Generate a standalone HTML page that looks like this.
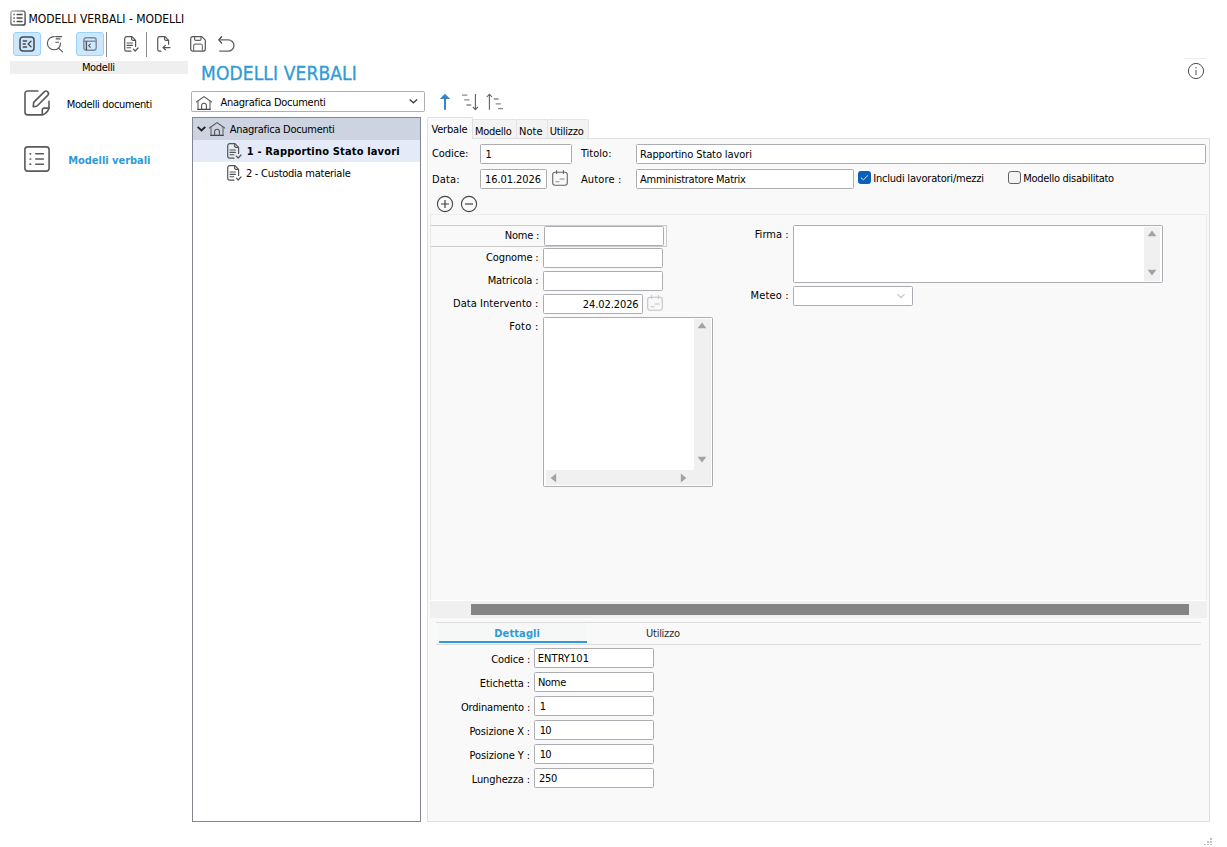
<!DOCTYPE html>
<html lang="it">
<head>
<meta charset="utf-8">
<title>MODELLI VERBALI - MODELLI</title>
<style>
html,body{margin:0;padding:0;background:#fff;}
body{width:1227px;height:847px;position:relative;overflow:hidden;font-family:"DejaVu Sans Condensed","Liberation Sans",sans-serif;font-size:11px;color:#000;}
.a{position:absolute;box-sizing:border-box;}
.t{position:absolute;white-space:pre;}
svg{position:absolute;overflow:visible;}
.in{position:absolute;box-sizing:border-box;background:#fff;border:1px solid #abadb3;border-radius:1.5px;}
.tb{position:absolute;box-sizing:border-box;background:#cce8ff;border:1px solid #99d1ff;border-radius:3px;}
.sep{position:absolute;width:1px;background:#8c8c8c;}
.row{position:absolute;left:0;right:0;height:22px;}
.sb{position:absolute;background:#f0f0f0;}
</style>
</head>
<body>
<!-- title icon -->
<svg style="left:10px;top:10px" width="16" height="16" viewBox="0 0 16 16" fill="none" stroke="#4a4a4a" stroke-width="1.3">
<defs><linearGradient id="tg" x1="0" y1="0" x2="1" y2="1"><stop offset="0" stop-color="#b8b8b8"/><stop offset="0.55" stop-color="#6a6a6a"/><stop offset="1" stop-color="#444"/></linearGradient></defs>
<rect x="0.9" y="0.9" width="14.2" height="14.2" rx="2.2" stroke="url(#tg)" stroke-width="1.5"/>
<path d="M3.4 4.6h1.4M3.4 8h1.4M3.4 11.4h1.4M6.6 4.6h6M6.6 8h6M6.6 11.4h6" stroke-width="1.5"/>
</svg>

<!-- toolbar -->
<div class="tb" style="left:13px;top:32px;width:28px;height:24px"></div>
<svg style="left:19px;top:36px" width="16" height="16" viewBox="0 0 16 16" fill="none" stroke="#4b4b4b" stroke-width="1.55" stroke-linecap="round" stroke-linejoin="round">
<rect x="1" y="1" width="14" height="14" rx="3"/>
<path d="M4.2 5h3.4M4.2 8h2.2M4.2 11h3.4M12 5.2L9.2 8l2.8 2.8" stroke-width="1.4"/>
</svg>
<svg style="left:46px;top:35px" width="18" height="18" viewBox="0 0 18 18" fill="none" stroke="#555" stroke-width="1.1" stroke-linecap="round">
<path d="M8.2 1.6A6.6 6.6 0 1 0 14.6 8"/>
<path d="M12.6 13.2L16.6 16.8"/>
<path d="M9.6 1.6h6M10.2 3.9h3.8M9.8 7.3h2.8"/>
</svg>
<div class="tb" style="left:76px;top:32px;width:28px;height:24px"></div>
<svg style="left:83px;top:37px" width="14" height="14" viewBox="0 0 14 14" fill="none" stroke="#7e8a96" stroke-width="1.4" stroke-linejoin="round">
<rect x="0.8" y="0.8" width="12.4" height="12.4" rx="2.4"/>
<path d="M0.8 4.2h12.4"/>
<path d="M3.4 4.2v9" stroke="#555"/>
<path d="M7.6 6.6L5.6 8.6l2 2" stroke="#555" stroke-width="1.1"/>
</svg>
<div class="sep" style="left:106px;top:32px;height:25px"></div>
<svg style="left:124px;top:36px" width="15" height="16" viewBox="0 0 15 16" fill="none" stroke="#555" stroke-width="1.2" stroke-linecap="round" stroke-linejoin="round">
<path d="M7 15.2H2.6A2 2 0 0 1 .7 13.2V2.7A2 2 0 0 1 2.6.7H8l3.6 3.6v6.2"/>
<path d="M7.6.9v2.2a1.2 1.2 0 0 0 1.2 1.2h2.4"/>
<path d="M3 7h5.4M3 9.4h5.4M3 11.8h3.8" stroke-width="1.1"/>
<path d="M9.4 13.2l1.8 1.8 2.8-3"/>
</svg>
<div class="sep" style="left:146px;top:32px;height:25px"></div>
<svg style="left:157px;top:36px" width="14" height="16" viewBox="0 0 14 16" fill="none" stroke="#555" stroke-width="1.2" stroke-linecap="round" stroke-linejoin="round">
<path d="M4 15.2H2.6A2 2 0 0 1 .7 13.2V2.7A2 2 0 0 1 2.6.7H8l3.6 3.6v4"/>
<path d="M7.6.9v2.2a1.2 1.2 0 0 0 1.2 1.2h2.4"/>
<path d="M13 11.6H6.2M8.4 9.4L6 11.6l2.4 2.2"/>
</svg>
<svg style="left:190px;top:36px" width="16" height="16" viewBox="0 0 16 16" fill="none" stroke="#555" stroke-width="1.2" stroke-linejoin="round">
<path d="M2.6.7h9.2l3.5 3.5v8.9a2 2 0 0 1-2 2H2.6a2 2 0 0 1-1.9-2V2.7A2 2 0 0 1 2.6.7z"/>
<path d="M4.6.9v2.4a1 1 0 0 0 1 1h4.4a1 1 0 0 0 1-1V.9" stroke="#666"/>
<path d="M3.6 15V9.8a1.6 1.6 0 0 1 1.6-1.6h5.6a1.6 1.6 0 0 1 1.6 1.6V15" stroke="#777"/>
</svg>
<svg style="left:218px;top:36px" width="17" height="16" viewBox="0 0 17 16" fill="none" stroke="#666" stroke-width="1.3" stroke-linecap="round" stroke-linejoin="round">
<path d="M3.6.8L.8 3.9l2.8 3.2" stroke="#444"/>
<path d="M1 3.900h9.300a5.600 5.600 0 0 1 0 11.200H1.200" stroke-linecap="butt" stroke-width="1.400"/>
</svg>

<!-- Modelli bar -->
<div class="a" style="left:10px;top:61px;width:178px;height:13px;background:#efefef"></div>

<!-- sidebar icons -->
<svg style="left:24px;top:90px" width="26" height="26" viewBox="0 0 26 26" fill="none" stroke="#5a5a5a" stroke-width="1.6" stroke-linecap="round" stroke-linejoin="round">
<path d="M13.900.950H3.600A2.600 2.600 0 0 0 1 3.550v18.750a2.600 2.600 0 0 0 2.600 2.600h14.700Q23.400 23.200 25 18.200V11.300"/>
<path d="M25 18.100h-4.800a1.900 1.900 0 0 0-1.900 1.900v4.800"/>
<path d="M9.200 16.600l.5-4.200L20.200 1.900a2.470 2.470 0 0 1 3.500 3.500L13.600 15.500q-.8.800-1.800.9z"/>
</svg>
<svg style="left:24px;top:146px" width="26" height="26" viewBox="0 0 26 26" fill="none" stroke="#5a5a5a" stroke-width="1.6" stroke-linecap="round" stroke-linejoin="round">
<rect x=".9" y=".9" width="24.200" height="24.200" rx="2.800"/>
<path d="M11.700 7.800h7.800M11.700 13h7.800M11.700 18.200h7.800" stroke-width="1.400"/>
<path d="M6.200 7.800h.4M6.200 13h.4M6.200 18.200h.4" stroke-width="1.700"/>
</svg>

<!-- info -->
<svg style="left:1187px;top:62px" width="18" height="18" viewBox="0 0 18 18" fill="none" stroke="#505050" stroke-width="1">
<circle cx="9" cy="9" r="7.600"/>
<path d="M9 8v5" stroke-width="1.300" stroke="#777"/>
<path d="M9 5v1.400" stroke-width="1.300" stroke="#777"/>
</svg>
<div class="a" style="left:1185px;top:58px;width:21px;height:1px;background:#ececec"></div>

<!-- combo -->
<div class="in" style="left:191px;top:91px;width:234px;height:21px;border-color:#b0b0b0;border-radius:2px"></div>
<svg style="left:196px;top:95px" width="16" height="15" viewBox="0 0 16 15" fill="none" stroke="#555" stroke-width="1.200" stroke-linejoin="round" stroke-linecap="round">
<path d="M.4 7L8 1.600l7.600 5.400" stroke-width="1.100"/>
<path d="M2 6.200v8.100M14 6.200v8.100" stroke="#777" stroke-width="1.300"/>
<path d="M1.800 14.400h12.400" stroke="#444" stroke-width="1.200"/>
<path d="M5.600 14.200v-3.600a2.400 2.400 0 0 1 4.800 0v3.600" stroke="#555" stroke-width="1.100"/>
</svg>
<svg style="left:409px;top:98px" width="9" height="6" viewBox="0 0 9 6" fill="none" stroke="#3c3c3c" stroke-width="1.300"><path d="M.7 1.400L4.400 4.800 8.100 1.400"/></svg>

<!-- tree -->
<div class="a" style="left:192px;top:117px;width:229px;height:705px;border:1px solid #80858f;background:#fff">
 <div class="row" style="top:0;background:#cdd3e0"></div>
 <div class="row" style="top:22px;background:#e5eaf8"></div>
</div>
<svg style="left:197px;top:126px" width="9" height="6" viewBox="0 0 9 6" fill="none" stroke="#222" stroke-width="1.800"><path d="M.7.900L4.500 4.500 8.300.9"/></svg>
<svg style="left:209px;top:121px" width="16" height="15" viewBox="0 0 16 15" fill="none" stroke="#555" stroke-width="1.200" stroke-linejoin="round" stroke-linecap="round">
<path d="M.4 7L8 1.600l7.600 5.400" stroke-width="1.100"/>
<path d="M2 6.200v8.100M14 6.200v8.100" stroke="#777" stroke-width="1.300"/>
<path d="M1.800 14.400h12.400" stroke="#444" stroke-width="1.200"/>
<path d="M5.600 14.200v-3.600a2.400 2.400 0 0 1 4.800 0v3.600" stroke="#555" stroke-width="1.100"/>
</svg>
<svg style="left:227px;top:143px" width="15" height="16" viewBox="0 0 15 16" fill="none" stroke="#555" stroke-width="1.200" stroke-linecap="round" stroke-linejoin="round">
<path d="M7 15.200H2.600A2 2 0 0 1 .7 13.200V2.700A2 2 0 0 1 2.600.7H8l3.600 3.600v6.200"/>
<path d="M7.600.9v2.200a1.200 1.200 0 0 0 1.200 1.200h2.400"/>
<path d="M3 7h5.400M3 9.400h5.400M3 11.800h3.800" stroke-width="1.100"/>
<path d="M9.400 13.200l1.800 1.800 2.800-3"/>
</svg>
<svg style="left:227px;top:165px" width="15" height="16" viewBox="0 0 15 16" fill="none" stroke="#555" stroke-width="1.200" stroke-linecap="round" stroke-linejoin="round">
<path d="M7 15.200H2.600A2 2 0 0 1 .7 13.200V2.700A2 2 0 0 1 2.600.7H8l3.600 3.600v6.200"/>
<path d="M7.600.9v2.200a1.200 1.200 0 0 0 1.200 1.200h2.400"/>
<path d="M3 7h5.400M3 9.400h5.400M3 11.800h3.800" stroke-width="1.100"/>
<path d="M9.400 13.200l1.800 1.800 2.800-3"/>
</svg>

<!-- sort icons -->
<svg style="left:439px;top:93px" width="12" height="17" viewBox="0 0 12 17" fill="#3a84c4" stroke="none">
<path d="M6 .8L11.200 6H.8z"/><rect x="5" y="5" width="2" height="11.800"/>
</svg>
<svg style="left:461px;top:93px" width="18" height="18" viewBox="0 0 18 18" fill="none" stroke="#777" stroke-width="1.100">
<path d="M1 2.200h5.400M3.200 6.900h5.200M5.400 12h4.800" stroke="#8a8a8a" stroke-width="1.300"/>
<path d="M14.400 1v15.400M11.800 13.800l2.600 2.800 2.600-2.800" stroke="#606060"/>
</svg>
<svg style="left:485px;top:93px" width="19" height="18" viewBox="0 0 19 18" fill="none" stroke="#777" stroke-width="1.100">
<path d="M4.400 16.800V1.200M1.800 4l2.600-2.800L7 4" stroke="#606060"/>
<path d="M8.800 6h4.800M10.600 10.800h5.200M13 15.700h5" stroke="#8a8a8a" stroke-width="1.300"/>
</svg>

<!-- tab page -->
<div class="a" style="left:427px;top:138px;width:783px;height:684px;border:1px solid #dfdfdf;background:#f9f9f9"></div>
<!-- inactive tabs -->
<div class="a" style="left:472px;top:119px;width:45px;height:19px;border:1px solid #e3e3e3;border-bottom:none;background:#f3f3f3;border-radius:2px 2px 0 0"></div>
<div class="a" style="left:516px;top:119px;width:32px;height:19px;border:1px solid #e3e3e3;border-bottom:none;background:#f3f3f3;border-radius:2px 2px 0 0"></div>
<div class="a" style="left:547px;top:119px;width:42px;height:19px;border:1px solid #e3e3e3;border-bottom:none;background:#f3f3f3;border-radius:2px 2px 0 0"></div>
<!-- active tab -->
<div class="a" style="left:427px;top:117px;width:46px;height:22px;border:1px solid #e0e0e0;border-bottom:none;background:#f9f9f9;border-radius:2px 2px 0 0"></div>

<!-- top form -->
<div class="in" style="left:480px;top:144px;width:92px;height:20px"></div>
<div class="in" style="left:636px;top:144px;width:570px;height:20px"></div>
<div class="in" style="left:480px;top:169px;width:67px;height:20px"></div>
<div class="in" style="left:636px;top:169px;width:218px;height:20px"></div>
<!-- calendar -->
<svg style="left:552px;top:170px" width="16" height="16" viewBox="0 0 16 16" fill="none" stroke="#666" stroke-width="1.100" stroke-linecap="round">
<rect x=".7" y="2.200" width="14.600" height="13" rx="2.400"/>
<path d="M4.600.6v2.800M11.400.6v2.800"/>
<path d="M8 9h4.200M4 11.800h3" stroke="#888"/>
</svg>
<!-- checkboxes -->
<div class="a" style="left:858px;top:171px;width:13px;height:13px;background:#0a5fb8;border-radius:3px"></div>
<svg style="left:858px;top:171px" width="13" height="13" viewBox="0 0 13 13" fill="none" stroke="#dbe8f6" stroke-width="1" stroke-linecap="round" stroke-linejoin="round"><path d="M3.200 6.900l2.200 1.900 4.300-4.200"/></svg>
<div class="a" style="left:1008px;top:171px;width:13px;height:13px;background:#f3f3f3;border:1px solid #626262;border-radius:3px"></div>
<!-- plus / minus -->
<svg style="left:436px;top:195px" width="18" height="18" viewBox="0 0 18 18" fill="none" stroke="#444" stroke-width="1.100">
<circle cx="9" cy="9" r="7.600"/><path d="M5 9h8M9 5v8" stroke-width="1.200"/>
</svg>
<svg style="left:460px;top:195px" width="18" height="18" viewBox="0 0 18 18" fill="none" stroke="#444" stroke-width="1.100">
<circle cx="9" cy="9" r="7.600"/><path d="M5 9h8" stroke-width="1.200"/>
</svg>

<!-- inner panel -->
<div class="a" style="left:430px;top:214px;width:777px;height:387px;border:1px solid #ebebeb;border-bottom-color:#fff"></div>
<!-- selected frame around Nome -->
<div class="a" style="left:431px;top:225px;width:236px;height:22px;border:1px solid #cbcbcb;border-left:none"></div>
<div class="in" style="left:544px;top:226px;width:120px;height:20px"></div>
<div class="in" style="left:543px;top:248px;width:120px;height:20px"></div>
<div class="in" style="left:543px;top:271px;width:120px;height:20px"></div>
<div class="in" style="left:543px;top:294px;width:100px;height:20px"></div>
<svg style="left:647px;top:295px" width="16" height="16" viewBox="0 0 16 16" fill="none" stroke="#c4c4c4" stroke-width="1.100" stroke-linecap="round">
<rect x=".7" y="2.200" width="14.600" height="13" rx="2.400"/>
<path d="M4.600.6v2.800M11.400.6v2.800"/>
<path d="M8 9h4.200M4 11.800h3"/>
</svg>
<!-- Foto box -->
<div class="in" style="left:543px;top:317px;width:170px;height:170px">
 <div class="sb" style="right:1px;top:1px;width:17px;bottom:1px"></div>
 <div class="sb" style="left:2px;bottom:1px;right:1px;height:15px"></div>
</div>
<svg style="left:697px;top:322px" width="10" height="7" viewBox="0 0 10 7" fill="#a3a3a3"><path d="M5 .6L9.400 6.200H.6z"/></svg>
<svg style="left:697px;top:456px" width="10" height="7" viewBox="0 0 10 7" fill="#a3a3a3"><path d="M5 6.400L9.400.8H.6z"/></svg>
<svg style="left:550px;top:473px" width="7" height="10" viewBox="0 0 7 10" fill="#a3a3a3"><path d="M.6 5L6.200.6v8.800z"/></svg>
<svg style="left:680px;top:473px" width="7" height="10" viewBox="0 0 7 10" fill="#a3a3a3"><path d="M6.400 5L.8.600v8.800z"/></svg>
<!-- Firma -->
<div class="in" style="left:793px;top:225px;width:370px;height:58px">
 <div class="sb" style="right:2px;top:1px;width:16px;bottom:1px"></div>
</div>
<svg style="left:1147px;top:230px" width="10" height="7" viewBox="0 0 10 7" fill="#a3a3a3"><path d="M5 .6L9.400 6.200H.6z"/></svg>
<svg style="left:1147px;top:269px" width="10" height="7" viewBox="0 0 10 7" fill="#a3a3a3"><path d="M5 6.400L9.400.8H.6z"/></svg>
<!-- Meteo -->
<div class="in" style="left:793px;top:286px;width:120px;height:20px"></div>
<svg style="left:897px;top:293px" width="9" height="6" viewBox="0 0 9 6" fill="none" stroke="#bcbcbc" stroke-width="1.100"><path d="M.5 1.400L4 4.600 7.500 1.400"/></svg>

<!-- horizontal scrollbar -->
<div class="a" style="left:430px;top:601px;width:777px;height:17px;background:#f0f0f0"></div>
<div class="a" style="left:471px;top:604px;width:718px;height:11px;background:#858585"></div>

<!-- details panel -->
<div class="a" style="left:436px;top:622px;width:765px;height:1px;background:#dcdcdc"></div>
<div class="a" style="left:439px;top:623px;width:148px;height:18px;background:#f6f7f7"></div>
<div class="a" style="left:439px;top:641px;width:148px;height:2px;background:#2e9bd6"></div>
<div class="a" style="left:436px;top:644px;width:765px;height:1px;background:#dcdcdc"></div>
<div class="in" style="left:534px;top:648px;width:120px;height:20px"></div>
<div class="in" style="left:534px;top:672px;width:120px;height:20px"></div>
<div class="in" style="left:534px;top:696px;width:120px;height:20px"></div>
<div class="in" style="left:534px;top:720px;width:120px;height:20px"></div>
<div class="in" style="left:534px;top:744px;width:120px;height:20px"></div>
<div class="in" style="left:534px;top:768px;width:120px;height:20px"></div>

<!-- resize grip -->
<svg style="left:1203px;top:837px" width="10" height="9" viewBox="0 0 10 9" fill="#bdbdbd">
<rect x="7" y="1" width="2" height="2"/><rect x="4" y="4" width="2" height="2"/><rect x="7" y="4" width="2" height="2"/>
<rect x="1" y="7" width="2" height="1"/><rect x="4" y="7" width="2" height="1"/><rect x="7" y="7" width="2" height="1"/>
</svg>

<div class="t" style="left:28.5px;top:11px;font-size:12px;line-height:16px;letter-spacing:-0.019px;">MODELLI VERBALI - MODELLI</div>
<div class="t" style="left:81.9px;top:61px;font-size:11px;line-height:14px;letter-spacing:-0.346px;">Modelli</div>
<div class="t" style="left:201.1px;top:61px;font-size:19px;line-height:25px;letter-spacing:0.119px;color:#2e9bd6;-webkit-text-stroke:0.3px #2e9bd6;">MODELLI VERBALI</div>
<div class="t" style="left:66.7px;top:98px;font-size:11px;line-height:14px;letter-spacing:-0.350px;">Modelli documenti</div>
<div class="t" style="left:68.2px;top:154px;font-size:11px;line-height:14px;letter-spacing:-0.024px;font-weight:bold;color:#2e9bd6;">Modelli verbali</div>
<div class="t" style="left:220.6px;top:96px;font-size:11px;line-height:14px;letter-spacing:-0.277px;">Anagrafica Documenti</div>
<div class="t" style="left:229.8px;top:123px;font-size:11px;line-height:14px;letter-spacing:-0.282px;">Anagrafica Documenti</div>
<div class="t" style="left:246.8px;top:145px;font-size:11px;line-height:14px;letter-spacing:0.165px;font-weight:bold;">1 - Rapportino Stato lavori</div>
<div class="t" style="left:245.9px;top:167px;font-size:11px;line-height:14px;letter-spacing:-0.248px;">2 - Custodia materiale</div>
<div class="t" style="left:431.4px;top:123px;font-size:11px;line-height:14px;letter-spacing:-0.167px;">Verbale</div>
<div class="t" style="left:475.0px;top:125px;font-size:11px;line-height:14px;letter-spacing:-0.290px;">Modello</div>
<div class="t" style="left:519.0px;top:125px;font-size:11px;line-height:14px;letter-spacing:0.016px;">Note</div>
<div class="t" style="left:549.7px;top:125px;font-size:11px;line-height:14px;letter-spacing:-0.241px;">Utilizzo</div>
<div class="t" style="left:431.9px;top:147px;font-size:11px;line-height:14px;letter-spacing:-0.054px;">Codice:</div>
<div class="t" style="left:485.5px;top:148px;font-size:11px;line-height:14px;letter-spacing:0.000px;">1</div>
<div class="t" style="left:580.9px;top:147px;font-size:11px;line-height:14px;letter-spacing:0.010px;">Titolo:</div>
<div class="t" style="left:639.9px;top:148px;font-size:11px;line-height:14px;letter-spacing:-0.106px;">Rapportino Stato lavori</div>
<div class="t" style="left:432.1px;top:173px;font-size:11px;line-height:14px;letter-spacing:0.126px;">Data:</div>
<div class="t" style="left:485.1px;top:173px;font-size:11px;line-height:14px;letter-spacing:-0.086px;">16.01.2026</div>
<div class="t" style="left:580.9px;top:173px;font-size:11px;line-height:14px;letter-spacing:0.141px;">Autore :</div>
<div class="t" style="left:640.0px;top:173px;font-size:11px;line-height:14px;letter-spacing:-0.259px;">Amministratore Matrix</div>
<div class="t" style="left:873.2px;top:172px;font-size:11px;line-height:14px;letter-spacing:-0.206px;">Includi lavoratori/mezzi</div>
<div class="t" style="left:1023.2px;top:172px;font-size:11px;line-height:14px;letter-spacing:-0.281px;">Modello disabilitato</div>
<div class="t" style="left:504.7px;top:229px;font-size:11px;line-height:14px;letter-spacing:-0.212px;">Nome :</div>
<div class="t" style="left:486.1px;top:251px;font-size:11px;line-height:14px;letter-spacing:-0.155px;">Cognome :</div>
<div class="t" style="left:487.7px;top:274px;font-size:11px;line-height:14px;letter-spacing:-0.118px;">Matricola :</div>
<div class="t" style="left:453.0px;top:297px;font-size:11px;line-height:14px;letter-spacing:0.051px;">Data Intervento :</div>
<div class="t" style="left:509.2px;top:320px;font-size:11px;line-height:14px;letter-spacing:0.256px;">Foto :</div>
<div class="t" style="left:582.8px;top:298px;font-size:11px;line-height:14px;letter-spacing:-0.086px;">24.02.2026</div>
<div class="t" style="left:754.7px;top:228px;font-size:11px;line-height:14px;letter-spacing:0.028px;">Firma :</div>
<div class="t" style="left:750.6px;top:289px;font-size:11px;line-height:14px;letter-spacing:0.123px;">Meteo :</div>
<div class="t" style="left:494.3px;top:627px;font-size:11px;line-height:14px;letter-spacing:0.108px;font-weight:bold;color:#2e9bd6;">Dettagli</div>
<div class="t" style="left:646.1px;top:627px;font-size:11px;line-height:14px;letter-spacing:-0.279px;color:#2b2b2b;">Utilizzo</div>
<div class="t" style="left:491.2px;top:653px;font-size:11px;line-height:14px;letter-spacing:-0.139px;">Codice :</div>
<div class="t" style="left:537.8px;top:652px;font-size:11px;line-height:14px;letter-spacing:0.050px;">ENTRY101</div>
<div class="t" style="left:479.8px;top:677px;font-size:11px;line-height:14px;letter-spacing:-0.062px;">Etichetta :</div>
<div class="t" style="left:538.0px;top:676px;font-size:11px;line-height:14px;letter-spacing:-0.322px;">Nome</div>
<div class="t" style="left:460.9px;top:701px;font-size:11px;line-height:14px;letter-spacing:-0.173px;">Ordinamento :</div>
<div class="t" style="left:539.7px;top:700px;font-size:11px;line-height:14px;letter-spacing:0.000px;">1</div>
<div class="t" style="left:469.4px;top:725px;font-size:11px;line-height:14px;letter-spacing:-0.123px;">Posizione X :</div>
<div class="t" style="left:539.7px;top:724px;font-size:11px;line-height:14px;letter-spacing:-0.697px;">10</div>
<div class="t" style="left:469.4px;top:749px;font-size:11px;line-height:14px;letter-spacing:-0.066px;">Posizione Y :</div>
<div class="t" style="left:539.7px;top:748px;font-size:11px;line-height:14px;letter-spacing:-0.697px;">10</div>
<div class="t" style="left:471.7px;top:773px;font-size:11px;line-height:14px;letter-spacing:-0.096px;">Lunghezza :</div>
<div class="t" style="left:539.1px;top:772px;font-size:11px;line-height:14px;letter-spacing:-0.397px;">250</div>
</body>
</html>
